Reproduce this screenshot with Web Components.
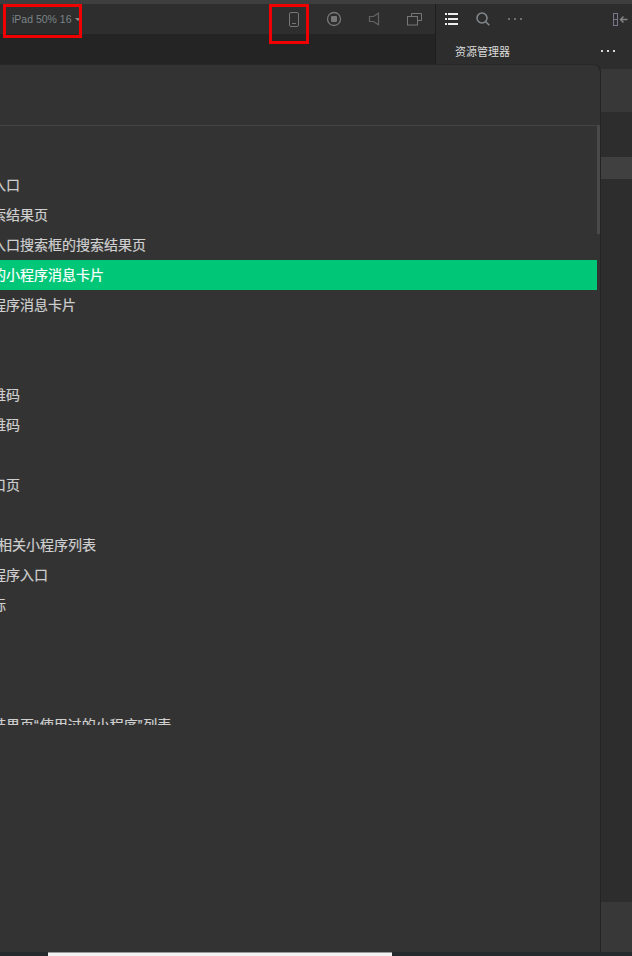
<!DOCTYPE html>
<html><head><meta charset="utf-8"><style>
html,body{margin:0;padding:0;background:#252a2d;overflow:hidden}
body{width:632px;height:956px;font-family:"Liberation Sans","Noto Sans CJK SC",sans-serif}
</style></head><body>
<ide-app></ide-app>
<script>
const I={
phone:'<svg width="12" height="15" viewBox="0 0 12 15" fill="none" stroke="#767676"><rect x="1.500" y="0.500" width="9" height="14" rx="1.500"/><path d="M4 11.500h4"/></svg>',
rec:'<svg width="16" height="16" viewBox="0 0 16 16"><circle cx="8" cy="8" r="6.500" fill="none" stroke="#777" stroke-width="1.300"/><rect x="5" y="5" width="6" height="6" rx="1" fill="#777"/></svg>',
spk:'<svg width="12" height="14" viewBox="0 0 12 14" fill="none" stroke="#636363" stroke-width="1.200"><path d="M10.500 1.200v11.600L5.500 9.500H1.500v-5h4z"/></svg>',
win:'<svg width="15" height="13" viewBox="0 0 15 13" fill="none" stroke="#777"><path d="M4.500 3.500v-3h10v7h-4"/><rect x=".5" y="3.500" width="10" height="8.500"/></svg>',
list:'<svg width="13" height="12" viewBox="0 0 13 12" fill="#eee"><rect x="0" y="0" width="2" height="2"/><rect x="3" y="0" width="10" height="2"/><rect x="0" y="5" width="2" height="2"/><rect x="3" y="5" width="10" height="2"/><rect x="0" y="10" width="2" height="2"/><rect x="3" y="10" width="10" height="2"/></svg>',
search:'<svg width="14" height="14" viewBox="0 0 14 14" fill="none" stroke="#858a8e" stroke-width="1.500"><circle cx="6" cy="6" r="5"/><path d="M9.500 9.500L13.300 13.300"/></svg>',
dots:c=>`<svg width="14" height="2" viewBox="0 0 14 2" fill="${c}"><rect x="0" y="0" width="2" height="2"/><rect x="6" y="0" width="2" height="2"/><rect x="12" y="0" width="2" height="2"/></svg>`,
coll:'<svg width="15" height="13" viewBox="0 0 15 13" fill="none"><rect x=".5" y=".5" width="4" height="12" stroke="#77778a"/><path d="M1 6.500h3" stroke="#77778a"/><path d="M14.500 6.500H8M10.500 3.500L7.500 6.500l3 3" stroke="#858585" stroke-width="1.400"/></svg>'
};
class IconBtn extends HTMLElement{constructor(){super();const k=this.getAttribute('icon');const s=this.attachShadow({mode:'open'});
s.innerHTML=`<style>:host{display:inline-flex;align-items:center;justify-content:center;line-height:0}</style>${k==='dots'?I.dots(this.getAttribute('color')||'#777'):I[k]}`}}
customElements.define('icon-btn',IconBtn);

class SimToolbar extends HTMLElement{constructor(){super();this.attachShadow({mode:'open'}).innerHTML=`<style>
:host{display:grid;grid-template-columns:288px 12px 26px 16px 26px 12px 27px 15px 1fr;align-items:center;height:30px;background:#2e2e2e;box-sizing:border-box}
.dev{display:flex;align-items:center;gap:3px;padding-left:12px;font-size:10.500px;color:#7b8488;white-space:nowrap}
.caret{width:0;height:0;border-left:3px solid transparent;border-right:3px solid transparent;border-top:3px solid #8a8a8a;margin-top:1px}
i{display:block}
</style><div class="dev"><span>iPad 50% 16</span><span class="caret"></span></div>
<icon-btn icon="phone"></icon-btn><i></i><icon-btn icon="rec"></icon-btn><i></i><icon-btn icon="spk"></icon-btn><i></i><icon-btn icon="win"></icon-btn>`}}
customElements.define('sim-toolbar',SimToolbar);

class SidePanel extends HTMLElement{constructor(){super();this.attachShadow({mode:'open'}).innerHTML=`<style>
:host{display:flex;flex-direction:column;height:100%;background:#2d2d2d;border-left:1px solid #1e1e1e;box-sizing:border-box}
.tabs{display:flex;align-items:center;height:30px;padding:0 4px 0 9px;gap:18px;box-sizing:border-box}
.tabs .sp{flex:1}
.head{display:flex;align-items:center;justify-content:space-between;height:35px;padding:0 17px 1px 19px;font-size:11px;color:#dcdcdc;box-sizing:border-box}
.a{height:43px;background:#383838}
.b{height:45px}
.c{height:22px;background:#404040}
.d{flex:1}
.e{height:50px;background:#383838}
</style><div class="tabs"><icon-btn icon="list"></icon-btn><icon-btn icon="search"></icon-btn><icon-btn icon="dots" color="#6f6f6f"></icon-btn><span class="sp"></span><icon-btn icon="coll"></icon-btn></div>
<div class="head"><span>资源管理器</span><icon-btn icon="dots" color="#d8d8d8"></icon-btn></div>
<div class="a"></div><div class="b"></div><div class="c"></div><div class="d"></div><div class="e"></div>`}}
customElements.define('side-panel',SidePanel);

class SceneRow extends HTMLElement{constructor(){super();this.attachShadow({mode:'open'}).innerHTML=`<style>
:host{display:flex;align-items:center;height:30px;padding:0 0 2px 94px;box-sizing:border-box;font-size:14px;color:#cfcfcf;white-space:nowrap;overflow:hidden;-webkit-text-stroke:.2px currentColor}
:host([active]){background:#00c777;color:#fff}
</style><div><slot></slot></div>`}}
customElements.define('scene-row',SceneRow);

const q=c=>`<span style="letter-spacing:1px">${c}</span>`;
const scenes=['发现栏小程序主入口','顶部搜索框的搜索结果页','发现栏小程序主入口搜索框的搜索结果页','单人聊天会话中的小程序消息卡片','群聊会话中的小程序消息卡片','收藏夹','扫描二维码','长按图片识别二维码','手机相册选取二维码','小程序模版消息','前往体验版的入口页','微信钱包','<span style="word-spacing:1px">公众号 profile 页相关小程序列表</span>','聊天顶部置顶小程序入口','安卓系统桌面图标','小程序 profile 页','扫描一维码','附近小程序列表',`顶部搜索框搜索结果页${q('“')}使用过的小程序${q('”')}列表`];
class SceneDialog extends HTMLElement{constructor(){super();this.attachShadow({mode:'open'}).innerHTML=`<style>
:host{position:absolute;left:-200px;top:64px;width:801px;height:888px;background:#333;border-radius:0 8px 0 0;border-right:1px solid #232323;border-top:1px solid #272727;box-sizing:border-box;display:flex;flex-direction:column;overflow:hidden}
.title{flex:none;border-bottom:1px solid #454545;box-sizing:border-box;height:61px}
.wrap{position:relative;height:599px;flex:none;padding-right:3px;box-sizing:border-box}
.list{height:100%;overflow:hidden;padding-top:44px;box-sizing:border-box}
.thumb{position:absolute;right:0;top:0;width:3px;height:108px;background:#4a4a4a}
</style><div class="title"></div><div class="wrap"><div class="list">${scenes.map(t=>`<scene-row${t.startsWith('单人')?' active':''}>${t}</scene-row>`).join('')}</div><div class="thumb"></div></div>`}}
customElements.define('scene-dialog',SceneDialog);

class RedBox extends HTMLElement{constructor(){super();this.attachShadow({mode:'open'}).innerHTML=`<style>
:host{position:absolute;border:3px solid #f00000;box-sizing:border-box;display:block}</style>`}}
customElements.define('red-box',RedBox);

class StatusStrip extends HTMLElement{constructor(){super();this.attachShadow({mode:'open'}).innerHTML=`<style>
:host{display:block;height:4px;background:#252a2d;padding-left:48px}
div{width:344px;height:4px;background:#f2f2f2;border-top:1px solid #999;box-sizing:border-box}</style><div></div>`}}
customElements.define('status-strip',StatusStrip);

class IdeApp extends HTMLElement{constructor(){super();this.attachShadow({mode:'open'}).innerHTML=`<style>
:host{display:grid;grid-template-rows:4px 948px 4px;width:632px;height:956px;position:relative;overflow:hidden}
.top{background:#3e3e3e}
.main{display:grid;grid-template-columns:435px 197px;min-height:0}
.left{display:flex;flex-direction:column;background:#2d2d2d}
.sub{height:31px;background:#242424}
.rest{flex:1}
</style><div class="top"></div><div class="main"><div class="left"><sim-toolbar></sim-toolbar><div class="sub"></div><div class="rest"></div></div><side-panel></side-panel></div><status-strip></status-strip>
<scene-dialog></scene-dialog>
<red-box style="left:3px;top:4px;width:79px;height:34px"></red-box>
<red-box style="left:269px;top:4px;width:40px;height:40px"></red-box>`}}
customElements.define('ide-app',IdeApp);
</script></body></html>
